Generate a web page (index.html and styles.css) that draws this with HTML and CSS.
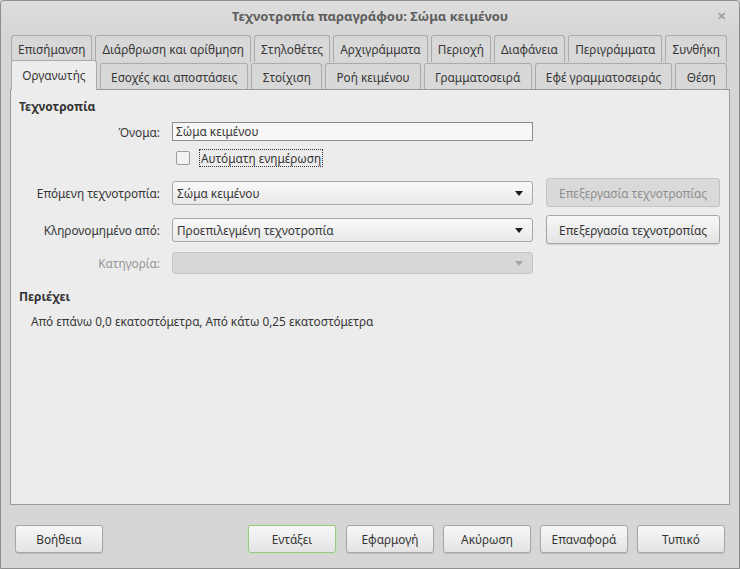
FILE: index.html
```html
<!DOCTYPE html>
<html lang="el">
<head>
  <meta charset="UTF-8">
  <title>Τεχνοτροπία παραγράφου: Σώμα κειμένου</title>
  <link rel="stylesheet" href="styles.css">
</head>
<body>

  <div class="window">
    <div class="titlebar">
      <span class="title">Τεχνοτροπία παραγράφου: Σώμα κειμένου</span>
      <span class="close">✕</span>
    </div>

    <div class="tabs">
      <div class="tab-row">
        <div class="tab">Επισήμανση</div>
        <div class="tab">Διάρθρωση και αρίθμηση</div>
        <div class="tab">Στηλοθέτες</div>
        <div class="tab">Αρχιγράμματα</div>
        <div class="tab">Περιοχή</div>
        <div class="tab">Διαφάνεια</div>
        <div class="tab">Περιγράμματα</div>
        <div class="tab">Συνθήκη</div>
      </div>
      <div class="tab-row front">
        <div class="tab active">Οργανωτής</div>
        <div class="tab">Εσοχές και αποστάσεις</div>
        <div class="tab">Στοίχιση</div>
        <div class="tab">Ροή κειμένου</div>
        <div class="tab">Γραμματοσειρά</div>
        <div class="tab">Εφέ γραμματοσειράς</div>
        <div class="tab">Θέση</div>
      </div>
    </div>

    <div class="panel">
      <h3 class="section">Τεχνοτροπία</h3>

      <div class="row row-name">
        <label class="label">Όνομα:</label>
        <div class="entry">Σώμα κειμένου</div>
      </div>

      <div class="row row-check">
        <span class="checkbox"></span>
        <span class="check-label">Αυτόματη ενημέρωση</span>
      </div>

      <div class="row row-next">
        <label class="label">Επόμενη τεχνοτροπία:</label>
        <div class="combo">Σώμα κειμένου<span class="arrow"></span></div>
        <button class="btn edit" disabled>Επεξεργασία τεχνοτροπίας</button>
      </div>

      <div class="row row-inherit">
        <label class="label">Κληρονομημένο από:</label>
        <div class="combo">Προεπιλεγμένη τεχνοτροπία<span class="arrow"></span></div>
        <button class="btn edit">Επεξεργασία τεχνοτροπίας</button>
      </div>

      <div class="row row-cat">
        <label class="label disabled">Κατηγορία:</label>
        <div class="combo off"><span class="arrow"></span></div>
      </div>

      <h3 class="section contains">Περιέχει</h3>
      <p class="summary">Από επάνω 0,0 εκατοστόμετρα, Από κάτω 0,25 εκατοστόμετρα</p>
    </div>

    <div class="actions">
      <button class="btn">Βοήθεια</button>
      <button class="btn ok">Εντάξει</button>
      <button class="btn">Εφαρμογή</button>
      <button class="btn">Ακύρωση</button>
      <button class="btn">Επαναφορά</button>
      <button class="btn">Τυπικό</button>
    </div>
  </div>

</body>
</html>
```

FILE: styles.css
```css
* {
  box-sizing: border-box;
}

body {
  margin: 0;
  font-family: 'Noto Sans', 'Open Sans', sans-serif;
  font-size: 11.8px;
  color: #363636;
  background: #d6d6d6;
}

.window {
  width: 740px;
  height: 569px;
  border: 1px solid #8e8e8e;
  border-radius: 4px 4px 0 0;
  background: #d6d6d6;
  display: flex;
  flex-direction: column;
}

.titlebar {
  height: 29px;
  display: flex;
  align-items: center;
  justify-content: center;
  position: relative;
  background: linear-gradient(#dedede, #d6d6d6);
  border-radius: 4px 4px 0 0;
}

.title {
  font-weight: bold;
  font-size: 13px;
  color: #5e5e5e;
}

.close {
  position: absolute;
  right: 13px;
  top: 7px;
  font-size: 11px;
  font-weight: bold;
  color: #a0a0a0;
}

/* notebook tabs */
.tabs {
  padding: 5px 12px 0 10px;
}

.tab-row {
  display: flex;
  gap: 3px;
  height: 27px;
}

.tab-row.front {
  margin-top: 1px;
  height: 26px;
  position: relative;
  z-index: 2;
}

.tab {
  flex: auto;
  display: flex;
  align-items: center;
  justify-content: center;
  padding: 0 6px;
  white-space: nowrap;
  background: #d8d8d8;
  border: 1px solid #ababab;
  border-bottom: none;
  border-radius: 3px 3px 0 0;
  color: #363636;
}

.tab.active {
  background: #ececec;
  margin-top: -3px;
  height: 30px;
  padding-bottom: 2px;
}

.panel {
  margin: 0 9px 0 9px;
  height: 416px;
  background: #ececec;
  border: 1px solid #9a9a9a;
  padding: 9px 0 0 8px;
}

.section {
  margin: 0;
  font-size: 12px;
  line-height: 16px;
  font-weight: bold;
  color: #333;
}

.row {
  display: flex;
  align-items: center;
}

.label {
  width: 141px;
  text-align: right;
  margin-right: 12px;
}

.label.disabled {
  color: #959595;
}

.row-name {
  margin-top: 7px;
  height: 19px;
}

.entry {
  width: 361px;
  height: 19px;
  background: #f7f7f7;
  border: 1px solid #8c8c8c;
  padding: 0 3px;
  line-height: 17px;
}

.row-check {
  margin-top: 8px;
  height: 18px;
  padding-left: 157px;
}

.checkbox {
  width: 14px;
  height: 14px;
  border: 1px solid #9c9c9c;
  border-radius: 2px;
  background: #f3f3f3;
  margin-right: 9px;
}

.check-label {
  border: 1px dotted #333;
  padding: 0 1px;
  line-height: 16px;
}

.row-next {
  margin-top: 11px;
  height: 29px;
}

.row-inherit {
  margin-top: 8px;
  height: 29px;
}

.row-cat {
  margin-top: 7px;
  height: 23px;
}

.combo {
  width: 361px;
  height: 24px;
  position: relative;
  padding: 0 4px;
  line-height: 22px;
  background: linear-gradient(#f9f9f9, #e9e9e9);
  border: 1px solid #a9a9a9;
  border-radius: 3px;
}

.combo.off {
  height: 22px;
  background: #d7d7d7;
  border-color: #c6c6c6;
}

.arrow {
  position: absolute;
  right: 9px;
  top: 9px;
  border-left: 4px solid transparent;
  border-right: 4px solid transparent;
  border-top: 5px solid #1e1e1e;
}

.combo.off .arrow {
  top: 8px;
  border-top-color: #a4a4a4;
}

.btn {
  font-family: inherit;
  font-size: 11.8px;
  color: #333;
  height: 28px;
  padding: 0 6px;
  background: linear-gradient(#f7f7f7, #e4e4e4);
  border: 1px solid #a6a6a6;
  border-radius: 3px;
  box-shadow: 0 1px 1px rgba(0, 0, 0, 0.12);
}

.btn.edit {
  width: 174px;
  height: 29px;
  margin-left: 13px;
}

.btn:disabled {
  background: #d9d9d9;
  border-color: #c3c3c3;
  color: #8e8e8e;
  box-shadow: none;
}

.contains {
  margin-top: 15px;
}

.summary {
  margin: 8px 0 0 12px;
  line-height: 16px;
}

.actions {
  display: flex;
  gap: 9px;
  padding: 20px 14px 0 14px;
}

.actions .btn {
  width: 88px;
}

.actions .ok {
  margin-left: auto;
  margin-right: 1px;
  border-color: #9cc587;
  box-shadow: 0 0 0 1px #c4e0b4;
}
```
